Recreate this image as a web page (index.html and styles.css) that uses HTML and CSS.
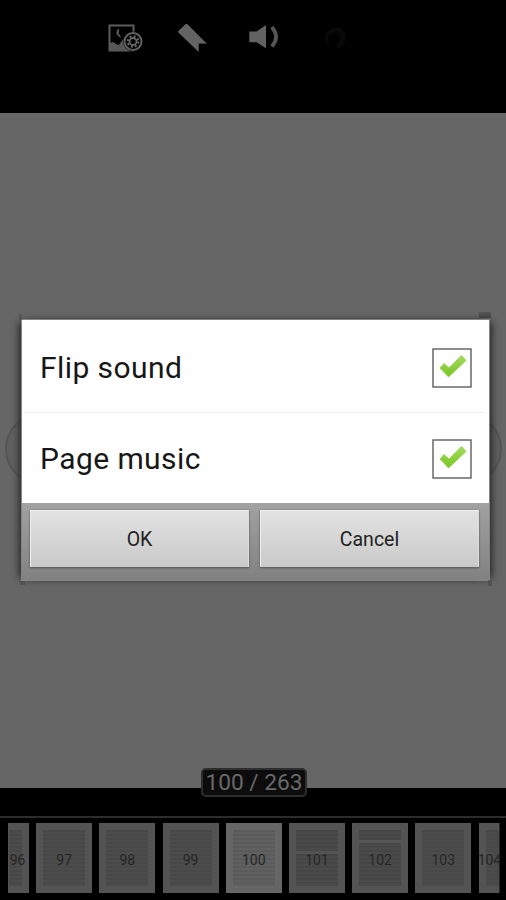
FILE: index.html
```html
<!DOCTYPE html>
<html lang="en">
<head>
<meta charset="utf-8">
<title>Reader sound settings</title>
<link rel="stylesheet" href="styles.css">
</head>
<body>
<div class="reader">
  <header class="toolbar">
    <svg class="tool" viewBox="-1 0 40 36" aria-hidden="true">
      <path d="M3.500 5.500h24v25h-24z" fill="none" stroke="#5c5c5c" stroke-width="2"/>
      <path d="M4 23l3-1 3 2 3 1 5-7 6 5v8H4z" fill="#585858"/>
      <path d="M12.500 9q-4 5 2 8-3.500-3-2-8z" fill="#666" stroke="#666" stroke-width=".8"/>
      <circle cx="27" cy="21.500" r="10" fill="#000"/>
      <circle cx="27" cy="21.500" r="8.500" fill="#000" stroke="#626262" stroke-width="2"/>
      <circle cx="27" cy="21.500" r="5.200" fill="none" stroke="#666" stroke-width="2.200" stroke-dasharray="2 2.080"/>
      <circle cx="27" cy="21.500" r="3.500" fill="none" stroke="#666" stroke-width="1.800"/>
    </svg>
    <svg class="tool mark" viewBox="0 0 40 36" aria-hidden="true">
      <path d="M4.500 10.800l7-6.600q1-1 2 0L32.900 23.800l-8.200-.3v8.500L4.600 12.700q-1-.8-.1-1.900z" fill="#636363"/>
    </svg>
    <svg class="tool sound" viewBox="0 -.5 40 36" aria-hidden="true">
      <path d="M3.300 11h7.200L20 4.600v23.200L10.500 21.800H3.300z" fill="#626262"/>
      <path d="M25.800 6.500q8.500 10 0 19.500" fill="none" stroke="#555" stroke-width="3.800"/>
    </svg>
    <svg class="tool palette" viewBox="3 0 40 36" aria-hidden="true">
      <path d="M17 28q-8-7-4-14t12-7q10 4 7 14-1 6-6 7-4-2 0-6 3-5-2-9-7-1-9 5 0 6 2 10z" fill="#080808"/>
    </svg>
  </header>

  <main class="page">
    <div class="arrow left"></div>
    <div class="arrow right"></div>
    <section class="dialog" role="dialog" aria-label="Sound options">
      <span class="corner top-left"></span><span class="corner top-right"></span>
      <span class="corner bottom-left"></span><span class="corner bottom-right"></span>
      <div class="options">
        <div class="option"><span>Flip sound</span>
          <svg class="check" viewBox="0 0 40 40" aria-hidden="true"><defs><linearGradient id="green" x2="0" y2="1"><stop stop-color="#a2dc5e"/><stop offset="1" stop-color="#79c421"/></linearGradient></defs><rect x="1" y="1" width="38" height="38" fill="#fff" stroke="#686868" stroke-width="1.500"/><path d="M8 20l4-4.500 5 4.500L29.500 7.500l4.500 5L16.500 29z" fill="url(#green)" stroke="#9bd65a" stroke-width="1" stroke-linejoin="round"/></svg>
        </div>
        <div class="option"><span>Page music</span>
          <svg class="check" viewBox="0 0 40 40" aria-hidden="true"><rect x="1" y="1" width="38" height="38" fill="#fff" stroke="#686868" stroke-width="1.500"/><path d="M8 20l4-4.500 5 4.500L29.500 7.500l4.500 5L16.500 29z" fill="url(#green)" stroke="#9bd65a" stroke-width="1" stroke-linejoin="round"/></svg>
        </div>
      </div>
      <div class="actions"><button>OK</button><button>Cancel</button></div>
    </section>
  </main>

  <footer class="strip">
    <div class="counter">100 / 263</div>
    <div class="thumbs">
      <div class="thumb first"><span>96</span></div>
      <div class="thumb"><span>97</span></div>
      <div class="thumb"><span>98</span></div>
      <div class="thumb"><span>99</span></div>
      <div class="thumb current"><span>100</span></div>
      <div class="thumb broken"><span>101</span></div>
      <div class="thumb heading"><span>102</span></div>
      <div class="thumb"><span>103</span></div>
      <div class="thumb last"><span>104</span></div>
    </div>
  </footer>
</div>
</body>
</html>
```
FILE: styles.css
```css
* { box-sizing: border-box; }
body { margin: 0; background: #000; font-family: Roboto, sans-serif; }
.reader { width: 506px; height: 900px; display: flex; flex-direction: column; overflow: hidden; }
.toolbar { height: 113px; flex: none; display: flex; gap: 31px; padding: 20px 0 0 105px; }
.tool { width: 40px; height: 36px; }
.mark { margin-left: -2px; }
.sound { margin-left: 1px; }
.palette { margin-left: -1px; }
.page { position: relative; height: 675px; flex: none; background: #666; padding: 206px 16px 0 21px; }
.arrow { position: absolute; top: 300px; width: 72px; height: 72px; border: 2px solid #555; border-radius: 50%; background: #606060; }
.arrow.left { left: 5px; }
.arrow.right { right: 4px; }

.dialog { position: relative; height: 262px; border: 1px solid #858585; clip-path: inset(-8px -14px -5px -14px); box-shadow: -5px 0 7px -3px #282828, 5px 0 7px -3px #282828; }
.corner { position: absolute; height: 6px; background: #484848; }
.top-left { width: 3px; left: -3px; top: -6px; opacity: .5; }
.top-right { width: 12px; right: -2px; top: -8px; background: linear-gradient(#575757, #404040); }
.bottom-left { width: 5px; left: -2px; bottom: -5px; height: 4px; opacity: .6; }
.bottom-right { width: 4px; right: -3px; bottom: -6px; opacity: .6; }
.options { position: relative; background: #fff; padding: 0 4px 0 2px; height: 183px; }
.option { height: 90px; display: flex; align-items: center; justify-content: space-between; padding: 1px 13.5px 0 16px; font-size: 30px; color: #171717; }
.option span { line-height: 40px; letter-spacing: .42px; }
.option:first-child { height: 93px; padding-top: 3px; border-bottom: 1px solid #f0f0f0; }
.check { width: 40px; height: 40px; flex: none; }
.actions { height: 77px; display: flex; gap: 11px; padding: 7px 10px 13px 8px; background: linear-gradient(#a2a2a2, #818181); }
.actions button { flex: 1; padding: 2px 0 0; border: 1px solid #eee; border-color: #f1f1f1 #ddd #c8c8c8 #eee; background: linear-gradient(#e2e2e2, #cacaca); box-shadow: 0 1px 2px #555, 0 0 1px #777; font: 19.5px Roboto, sans-serif; color: #222; }

.strip { position: relative; height: 112px; padding-top: 28px; }
.counter { position: absolute; top: -20px; left: 201px; width: 106px; height: 29px; border: 2px solid #2e2e2e; border-radius: 5px; background: #0c0c0c; color: #696969; font-size: 22.7px; line-height: 25px; text-align: center; white-space: nowrap; }
.thumbs { border-top: 2px solid #2c2c2c; padding: 5px 6px 0 8px; display: flex; gap: 7.2px; }
.thumb { position: relative; width: 56px; height: 70px; flex: none; display: flex; align-items: center; justify-content: center; overflow: hidden; border: 7px solid #535353; background: repeating-linear-gradient(#484848 0 2px, #4c4c4c 2px 4px); color: #262626; font-size: 14px; }
.thumb span { flex: none; position: relative; top: 2px; }
.first { width: 21px; border-width: 7px 7px 7px 1px; }
.last { width: 21px; border-width: 7px 0 7px 7px; }
.first span { left: 2px; }
.last span { left: -3px; }
.thumb.first, .thumb.last { overflow: visible; clip-path: inset(0); }
.current { border-color: #666; background: repeating-linear-gradient(#5b5b5b 0 2px, #606060 2px 4px); }
.broken { background: linear-gradient(transparent 21px, #535353 21px 24px, transparent 24px), repeating-linear-gradient(#464646 0 2px, #4a4a4a 2px 4px); }
.heading { background: linear-gradient(transparent 10px, #565656 10px 13px, transparent 13px), repeating-linear-gradient(#464646 0 2px, #4a4a4a 2px 4px); }
```
